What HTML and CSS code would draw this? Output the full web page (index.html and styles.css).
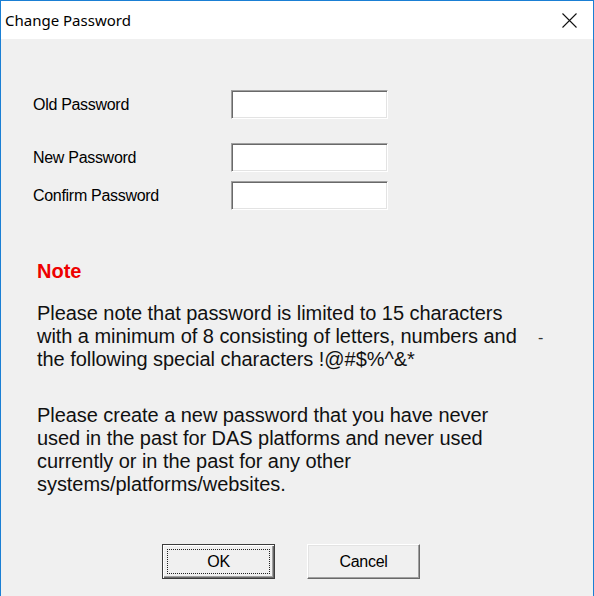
FILE: index.html
```html
<!DOCTYPE html>
<html lang="en">
<head>
    <meta charset="UTF-8">
    <meta name="viewport" content="width=device-width, initial-scale=1.0">
    <title>Change Password</title>
    <link rel="stylesheet" href="styles.css">
</head>
<body>
    <div class="window">
        <div class="titlebar">
            <span class="title">Change Password</span>
            <svg class="close" width="15" height="15" viewBox="0 0 15 15">
                <path d="M0.5 0.5 L14.5 14.5 M14.5 0.5 L0.5 14.5" stroke="#111" stroke-width="1.1" fill="none"/>
            </svg>
        </div>
        <div class="content">
            <div class="form">
                <div class="row row-old">
                    <label for="old-pw">Old Password</label>
                    <input type="password" id="old-pw">
                </div>
                <div class="row row-new">
                    <label for="new-pw">New Password</label>
                    <input type="password" id="new-pw">
                </div>
                <div class="row row-confirm">
                    <label for="confirm-pw">Confirm Password</label>
                    <input type="password" id="confirm-pw">
                </div>
            </div>
            <div class="note">
                <h2>Note</h2>
                <p class="first">Please note that password is limited to 15 characters with a minimum of 8 consisting of letters, numbers and the following special characters !@#$%^&amp;*</p>
                <span class="stray">-</span>
                <p>Please create a new password that you have never used in the past for DAS platforms and never used currently or in the past for any other systems/platforms/websites.</p>
            </div>
            <div class="buttons">
                <button class="default">OK</button>
                <button>Cancel</button>
            </div>
        </div>
    </div>
</body>
</html>
```

FILE: styles.css
```css
body {
    margin: 0;
    padding: 0;
    background-color: #f0f0f0;
    font-family: 'Liberation Sans', Arial, sans-serif;
    color: #000;
}
.window {
    width: 594px;
    height: 596px;
    box-sizing: border-box;
    border: 1px solid #1a7fd4;
    border-bottom: none;
    background-color: #f0f0f0;
    overflow: hidden;
}
.titlebar {
    height: 38px;
    background-color: #fff;
    display: flex;
    align-items: center;
    justify-content: space-between;
    padding: 0 16px 0 4px;
}
.title {
    font-family: 'Noto Sans', 'Open Sans', sans-serif;
    font-size: 15px;
    color: #000;
    margin-top: -1px;
}
.close {
    display: block;
}
.content {
    padding-left: 32px;
}
.form {
    padding-top: 51px;
}
.row {
    display: flex;
    align-items: center;
}
.row label {
    width: 198px;
    font-size: 16px;
    letter-spacing: -0.3px;
    line-height: 20px;
}
.row input {
    width: 157px;
    height: 29px;
    box-sizing: border-box;
    margin: 0;
    padding: 0 4px;
    background-color: #fff;
    border: 1px solid;
    border-color: #a0a0a0 #fff #fff #a0a0a0;
    box-shadow: inset 1px 1px #696969, inset -1px -1px #e3e3e3;
    outline: none;
}
.row-new {
    margin-top: 24px;
}
.row-confirm {
    margin-top: 9px;
}
.note {
    position: relative;
    padding-left: 4px;
    margin-top: 50px;
}
.note h2 {
    margin: 0;
    font-size: 20px;
    line-height: 23px;
    font-weight: bold;
    color: #ee0000;
}
.note p {
    margin: 33px 0 0 0;
    width: 490px;
    font-size: 20px;
    line-height: 23px;
    letter-spacing: -0.05px;
    color: #111;
}
.note p.first {
    margin-top: 19px;
}
/* stray mark at the end of the second line */
.stray {
    position: absolute;
    left: 505px;
    top: 68px;
    font-size: 16px;
    line-height: 20px;
    color: #333;
}
.buttons {
    display: flex;
    gap: 32px;
    padding-left: 129px;
    margin-top: 48px;
}
.buttons button {
    width: 113px;
    height: 35px;
    box-sizing: border-box;
    margin: 0;
    padding: 0;
    font-family: 'Liberation Sans', Arial, sans-serif;
    font-size: 16px;
    letter-spacing: -0.3px;
    color: #000;
    background-color: #f0f0f0;
    border: 1px solid;
    border-color: #fff #696969 #696969 #fff;
    box-shadow: inset -1px -1px #a0a0a0, inset 1px 1px #e3e3e3;
}
.buttons button.default {
    border-color: #3c3c3c;
    box-shadow: inset 1px 1px #fff, inset -1px -1px #696969, inset -2px -2px #a0a0a0;
    outline: 1px dotted #222;
    outline-offset: -6px;
}
```
